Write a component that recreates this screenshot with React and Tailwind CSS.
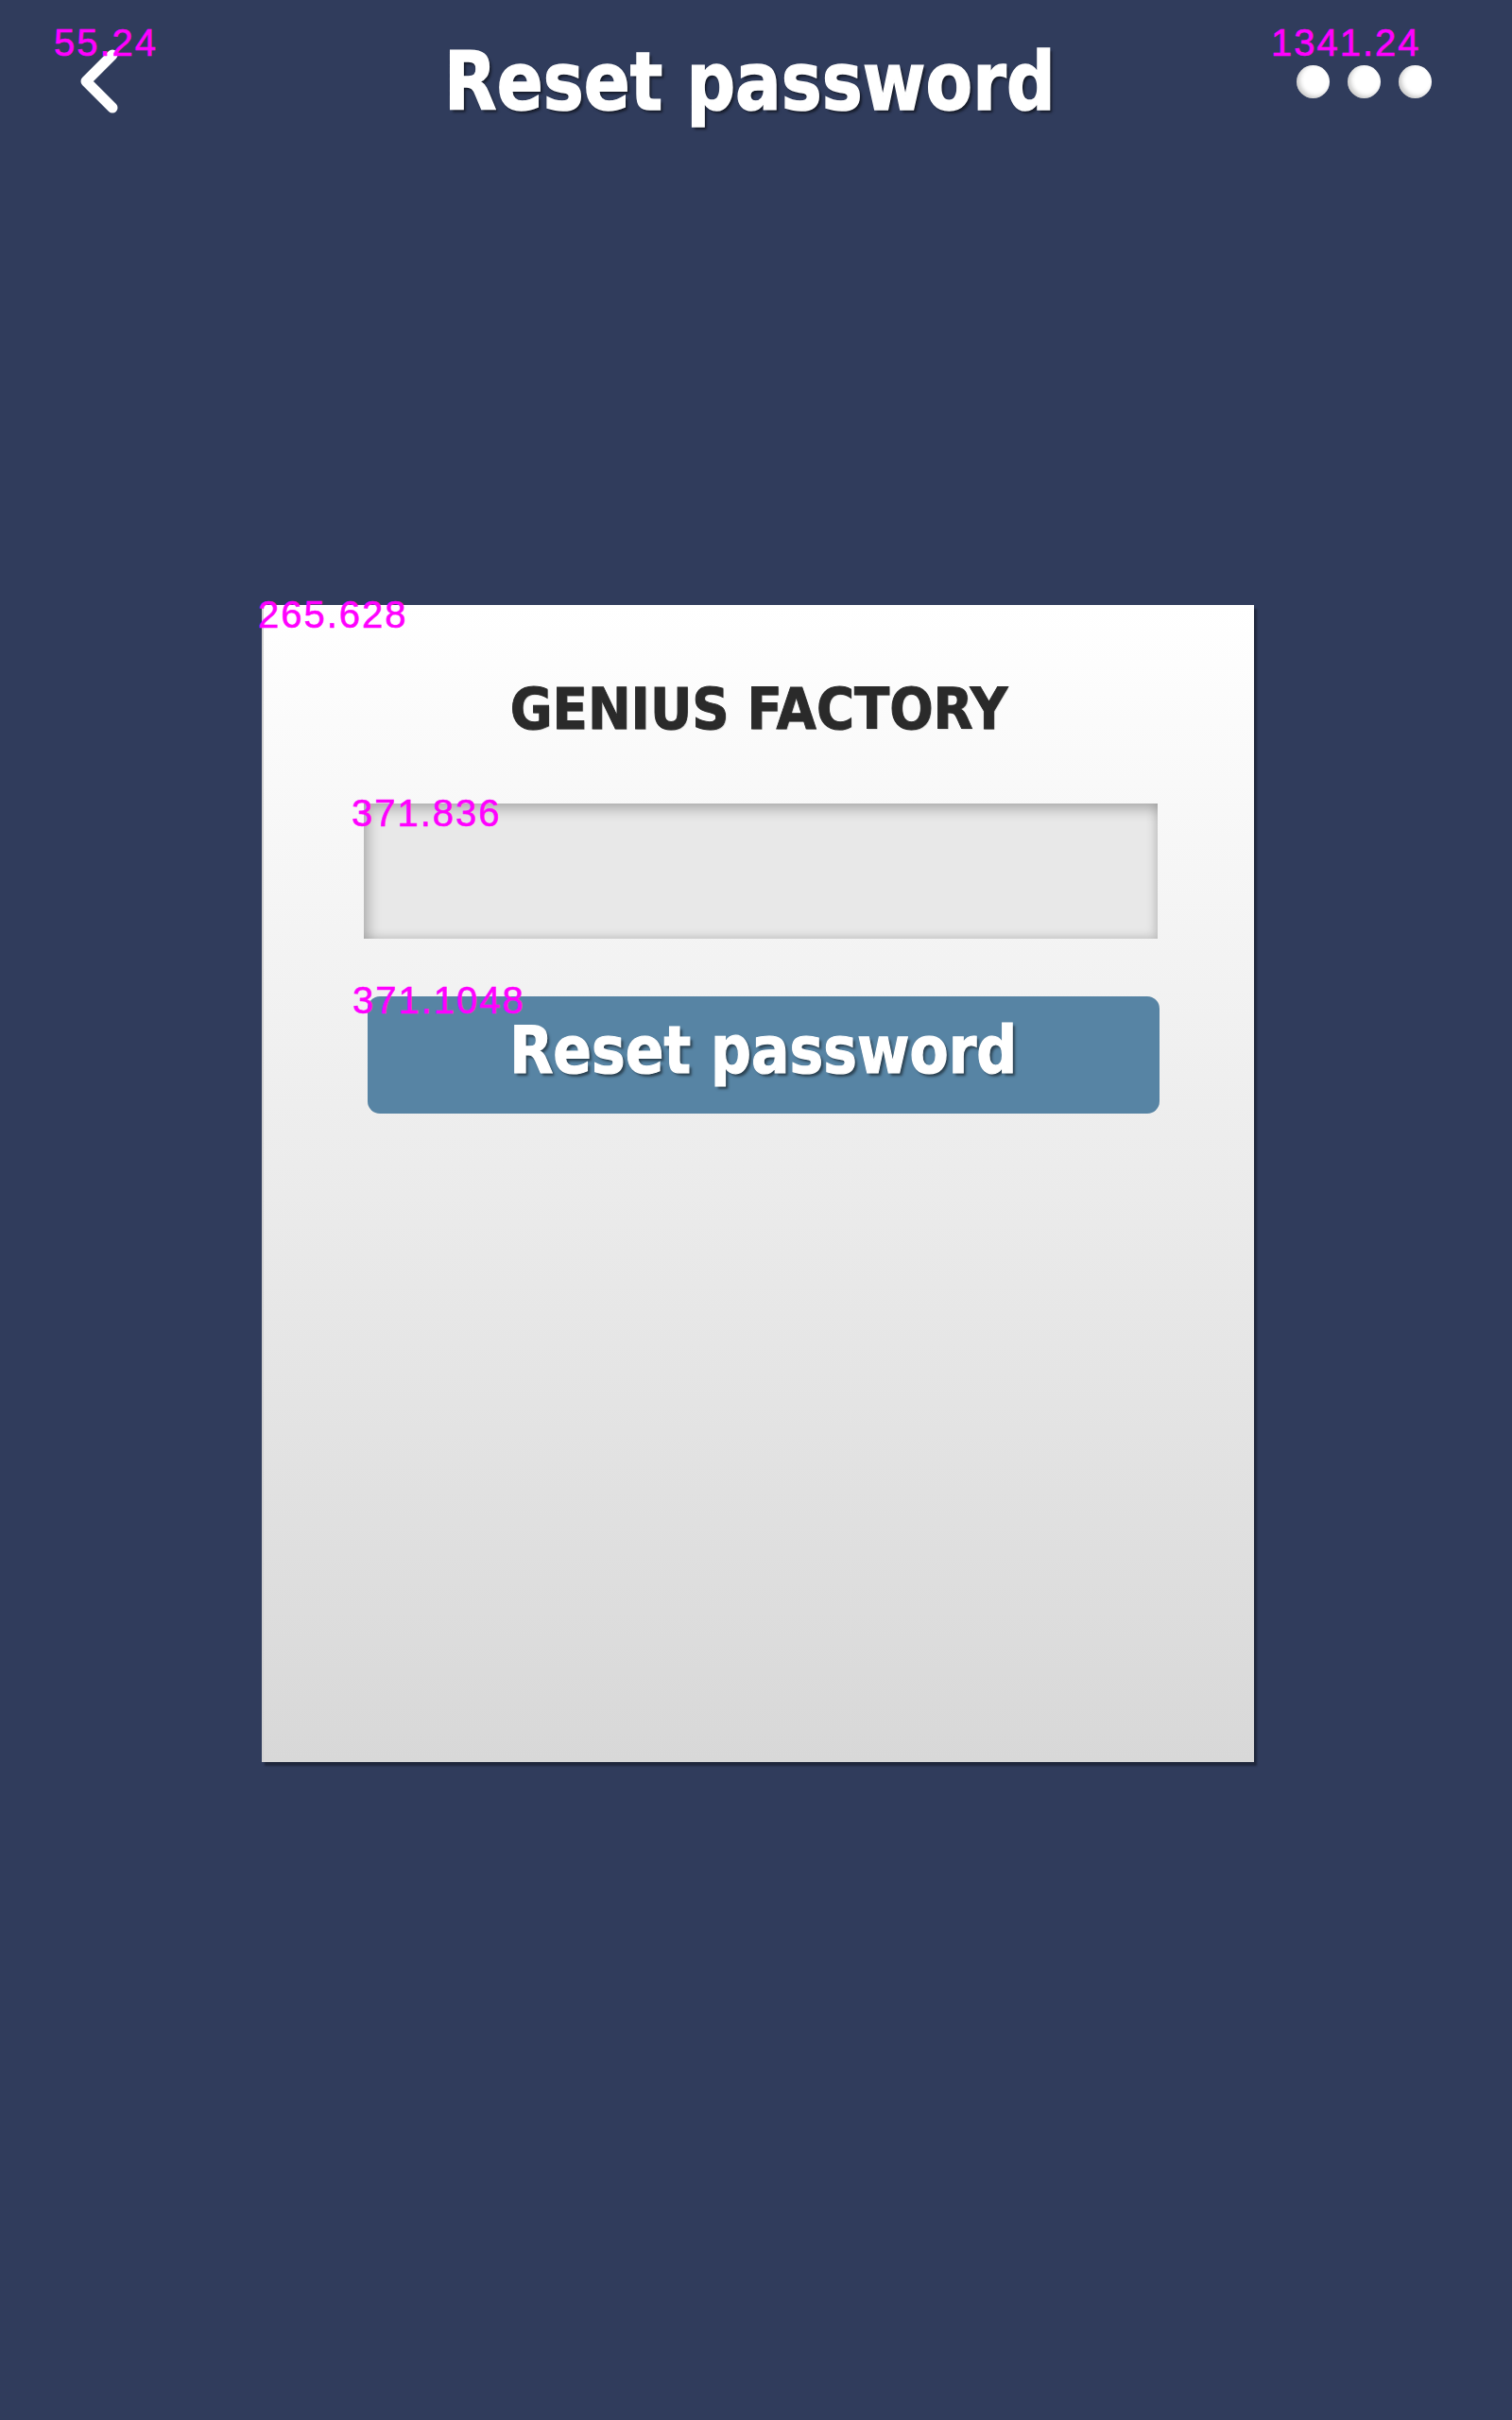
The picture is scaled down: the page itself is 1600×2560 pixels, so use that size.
import React from "react";

const labels = [
  { text: "55.24", cls: "left-[57px] top-[25px]" },
  { text: "1341.24", cls: "left-[1345px] top-[25px]" },
  { text: "265.628", cls: "left-[273px] top-[630px]" },
  { text: "371.836", cls: "left-[372px] top-[840px]" },
  { text: "371.1048", cls: "left-[373px] top-[1038px]" },
];

const BackIcon = () => (
  <svg width="40" height="68" viewBox="0 0 40 68" fill="none">
    <polyline
      points="34,6 6,34 34,62"
      stroke="#ffffff"
      strokeWidth="11"
      strokeLinecap="round"
      strokeLinejoin="round"
    />
  </svg>
);

const Dot = () => (
  <div className="w-[35px] h-[35px] rounded-full bg-white shadow-[inset_3px_-2px_5px_rgba(0,0,0,0.22)]" />
);

const App = () => {
  return (
    <div className="relative min-h-[2560px] w-[1600px] bg-[#303c5c] font-['DejaVu_Sans','Verdana',sans-serif]">
      {/* header */}
      <div className="grid h-[172px] grid-cols-[1fr_auto_1fr] items-center">
        <div className="justify-self-start pl-[85px]">
          <BackIcon />
        </div>
        <h1 className="mr-[14px] scale-x-[0.85] text-[85px] font-bold leading-none text-white [-webkit-text-stroke:1.5px_#ffffff] [text-shadow:3px_3px_3px_rgba(0,0,0,0.55)]">
          Reset password
        </h1>
        <div className="flex gap-[19px] justify-self-end pr-[85px]">
          <Dot />
          <Dot />
          <Dot />
        </div>
      </div>

      {/* card */}
      <div className="ml-[277px] mt-[468px] flex h-[1224px] w-[1050px] flex-col border-l-2 border-[#d2d2d2] bg-gradient-to-b from-white to-[#d8d8d8] pt-[80px] shadow-[3px_4px_2px_rgba(0,0,0,0.35)]">
        <div className="scale-x-[0.91] text-center text-[60px] font-bold leading-none text-[#2a2a2a] [-webkit-text-stroke:1px_#2a2a2a] [text-shadow:1px_1px_1px_rgba(0,0,0,0.2)]">
          GENIUS FACTORY
        </div>
        <div className="ml-[106px] mt-[70px] h-[143px] w-[840px] bg-[#e8e8e8] shadow-[inset_5px_6px_14px_rgba(0,0,0,0.25),inset_-4px_-3px_10px_rgba(0,0,0,0.1)]" />
        <button className="ml-[110px] mt-[61px] flex h-[124px] w-[838px] items-center justify-center rounded-[13px] bg-[#5784a4] pb-[9px]">
          <span className="scale-x-[0.87] text-[69px] font-bold leading-none text-white [-webkit-text-stroke:1.2px_#ffffff] [text-shadow:3px_3px_3px_rgba(0,0,0,0.5)]">
            Reset password
          </span>
        </button>
      </div>

      {labels.map((l) => (
        <span
          key={l.text}
          className={`absolute ${l.cls} font-['Liberation_Sans',Arial,sans-serif] text-[40px] leading-none tracking-[2px] text-[#ff00ff] [-webkit-text-stroke:0.6px_#ff00ff]`}
        >
          {l.text}
        </span>
      ))}
    </div>
  );
};

export default App;
